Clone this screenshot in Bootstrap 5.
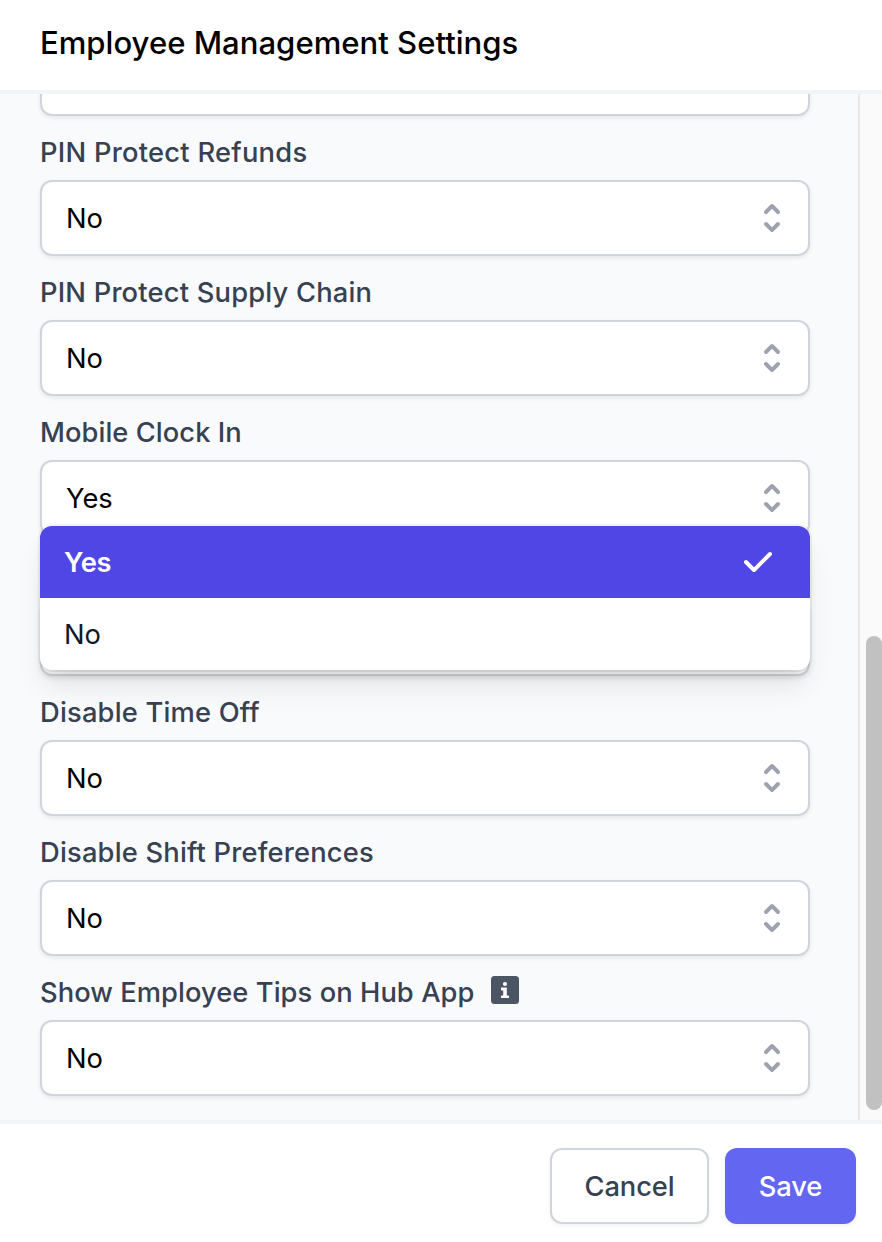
<!DOCTYPE html>
<html lang="en">
<head>
<meta charset="utf-8">
<meta name="viewport" content="width=device-width, initial-scale=1">
<title>Employee Management Settings</title>
<link href="https://cdn.jsdelivr.net/npm/bootstrap@5.3.0/dist/css/bootstrap.min.css" rel="stylesheet">
<style>
body{font-family:Inter,"Liberation Sans",sans-serif;font-size:27.3px;line-height:40px;letter-spacing:.2px;color:#000;background:#fff}
.panel-head{height:94px;border-bottom:4px solid #f3f4f6;padding:0 40px 4px}
.panel-title{font-size:31.1px;font-weight:500;letter-spacing:0;line-height:48px;color:#000}
.panel-body{background:#f9fafc}
.fields{padding:0 48px 0 40px}
.field{height:140px;padding-top:16px}
.field-first{height:22px;display:flow-root}
.field-first .picker{margin-top:-54px}
.field-label{height:40px;line-height:42px;margin-bottom:8px;font-weight:500;color:#374151}
.field-label.snug{letter-spacing:.06px}
.field-label.airy{letter-spacing:.26px}
.picker{height:76px;padding:0 16px 0 24px;background:#fff;border:2px solid #d1d5db;border-radius:12px;box-shadow:0 2px 4px rgba(0,0,0,.08);font:inherit;letter-spacing:0;color:#000;text-align:left}
.picker span,.option span{padding-top:2px}
.options{left:0;right:0;top:66px;z-index:5;border-radius:12px;overflow:hidden;background:#fff;box-shadow:0 0 0 2px rgba(0,0,0,.05),0 20px 30px -6px rgba(0,0,0,.1),0 8px 12px -4px rgba(0,0,0,.1);letter-spacing:0}
.option{height:72px;padding:0 32px 0 24px;color:#111827}
.option.chosen{background:#4f46e5;color:#fff;font-weight:600;letter-spacing:-.15px}
.info-mark{margin-left:17px}
.scroll-track{width:24px;background:#fafafa;border-left:2px solid #e8e8e8;padding:542px 0 10px 6px}
.scroll-thumb{background:#c1c1c1;border-radius:8px}
.panel-foot{height:122px;border-top:4px solid #f3f4f6;padding:24px 26px 18px;gap:16px}
.action{height:76px;padding:2px 0 0;font-size:27.3px;font-weight:500;line-height:40px;letter-spacing:-.1px;border-radius:12px;box-shadow:0 2px 4px rgba(0,0,0,.05)}
.cancel{width:159px;border:2px solid #d1d5db;background:#fff;color:#374151}
.save{width:131px;border:0;background:#6366f1;color:#fff}
</style>
</head>
<body>
<svg class="d-none">
<symbol id="updown" viewBox="0 0 20 20"><path fill="#9ca3af" fill-rule="evenodd" d="M10 3a1 1 0 01.707.293l3 3a1 1 0 01-1.414 1.414L10 5.414 7.707 7.707a1 1 0 01-1.414-1.414l3-3A1 1 0 0110 3zm-3.707 9.293a1 1 0 011.414 0L10 14.586l2.293-2.293a1 1 0 011.414 1.414l-3 3a1 1 0 01-1.414 0l-3-3a1 1 0 010-1.414z"/></symbol>
</svg>
<div class="d-flex flex-column vh-100 overflow-hidden">
<header class="panel-head d-flex align-items-center flex-shrink-0"><h1 class="panel-title m-0">Employee Management Settings</h1></header>
<main class="panel-body d-flex flex-grow-1 overflow-hidden">
<div class="fields flex-grow-1">
<div class="field-first"><div class="picker"></div></div>
<div class="field"><div class="field-label airy">PIN Protect Refunds</div><button type="button" class="picker w-100 d-flex align-items-center justify-content-between"><span>No</span><svg width="40" height="40"><use href="#updown"/></svg></button></div>
<div class="field"><div class="field-label">PIN Protect Supply Chain</div><button type="button" class="picker w-100 d-flex align-items-center justify-content-between"><span>No</span><svg width="40" height="40"><use href="#updown"/></svg></button></div>
<div class="field"><div class="field-label snug">Mobile Clock In</div>
<div class="position-relative"><button type="button" class="picker w-100 d-flex align-items-center justify-content-between"><span>Yes</span><svg width="40" height="40"><use href="#updown"/></svg></button>
<div class="options position-absolute">
<div class="option chosen d-flex align-items-center justify-content-between"><span>Yes</span><svg width="40" height="40" viewBox="0 0 20 20"><path fill="#fff" fill-rule="evenodd" d="M16.707 5.293a1 1 0 010 1.414l-8 8a1 1 0 01-1.414 0l-4-4a1 1 0 011.414-1.414L8 12.586l7.293-7.293a1 1 0 011.414 0z"/></svg></div>
<div class="option d-flex align-items-center"><span>No</span></div>
</div></div></div>
<div class="field"><div class="field-label"></div><div class="picker"></div></div>
<div class="field"><div class="field-label">Disable Time Off</div><button type="button" class="picker w-100 d-flex align-items-center justify-content-between"><span>No</span><svg width="40" height="40"><use href="#updown"/></svg></button></div>
<div class="field"><div class="field-label">Disable Shift Preferences</div><button type="button" class="picker w-100 d-flex align-items-center justify-content-between"><span>No</span><svg width="40" height="40"><use href="#updown"/></svg></button></div>
<div class="field"><div class="field-label snug d-flex"><span>Show Employee Tips on Hub App</span><svg class="info-mark mt-1" width="28" height="28" viewBox="0 0 28 28"><rect width="28" height="28" rx="3.5" fill="#4b5563"/><circle cx="14" cy="8" r="2.1" fill="#fff"/><path fill="#fff" d="M10.6 11.6h5.2v7.8h1.6q.6 0 .6.6v1.4q0 .6-.6.6h-6.8q-.6 0-.6-.6V20q0-.6.6-.6h1.600v-5h-1.600q-.6 0-.6-.6v-1.600q0-.6.6-.6z"/></svg></div><button type="button" class="picker w-100 d-flex align-items-center justify-content-between"><span>No</span><svg width="40" height="40"><use href="#updown"/></svg></button></div>
</div>
<div class="scroll-track flex-shrink-0"><div class="scroll-thumb h-100"></div></div>
</main>
<footer class="panel-foot d-flex justify-content-end flex-shrink-0"><button type="button" class="btn action cancel">Cancel</button><button type="button" class="btn action save">Save</button></footer>
</div>
<script src="https://cdn.jsdelivr.net/npm/bootstrap@5.3.0/dist/js/bootstrap.bundle.min.js"></script>
</body>
</html>
